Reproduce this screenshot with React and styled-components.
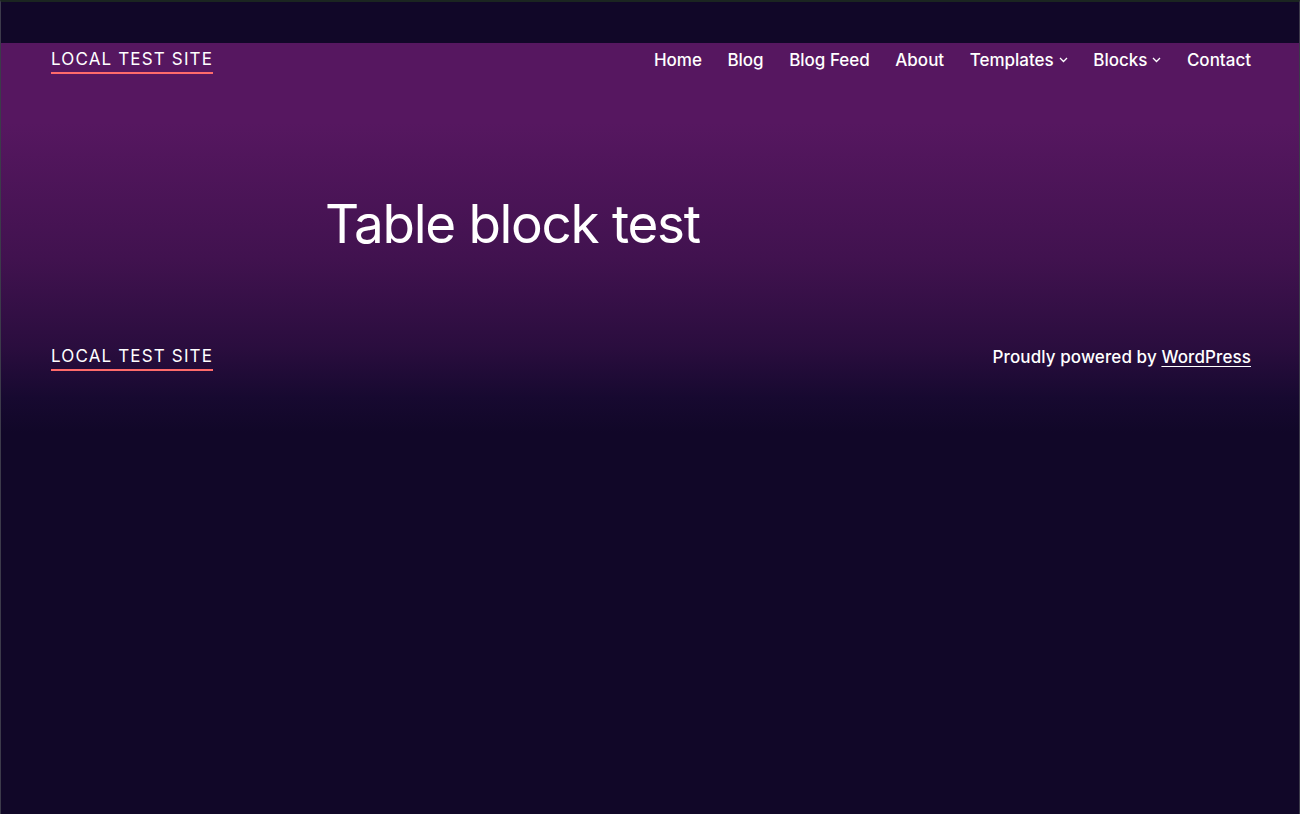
import React from "react";
import styled, { createGlobalStyle } from "styled-components";

const Global = createGlobalStyle`
  html, body { margin: 0; padding: 0; height: 100%; }
  body {
    background: #110728;
    font-family: Inter, "Noto Sans", sans-serif;
    color: #ffffff;
  }
  #root { min-height: 100%; }
`;

const Frame = styled.div`
  box-sizing: border-box;
  min-height: 814px;
  border-top: 2px solid #1b2521;
  border-left: 1px solid #3c3a4a;
  border-right: 1px solid #3c3a4a;
  background: #110728;
  display: flex;
  flex-direction: column;
`;

const TopBar = styled.div`
  height: 41px;
  background: #110728;
  flex-shrink: 0;
`;

const Page = styled.div`
  background: linear-gradient(
    to bottom,
    #561760 0px,
    #561760 80px,
    #41124f 215px,
    #2a0d3e 305px,
    #170930 355px,
    #110728 390px
  );
  flex: 1;
`;

const Bar = styled.header`
  display: flex;
  align-items: center;
  justify-content: space-between;
  padding: 2px 48px 0 50px;
  height: 30px;
`;

const SiteTitle = styled.a`
  font-size: 17px;
  font-weight: 400;
  letter-spacing: 1.15px;
  text-transform: uppercase;
  color: #fff;
  text-decoration: none;
  border-bottom: 2px solid #ff6b6b;
  padding-bottom: 3px;
  margin-top: 2px;
  line-height: 20px;
`;

const Nav = styled.nav`
  display: flex;
  align-items: center;
  gap: 25.5px;
`;

const NavItem = styled.a`
  font-size: 17px;
  font-weight: 500;
  color: #fff;
  text-decoration: none;
  display: flex;
  align-items: center;
  gap: 5px;
  letter-spacing: 0px;
`;

const Chevron = () => (
  <svg width="9" height="6" viewBox="0 0 9 6" fill="none">
    <path d="M1 1l3.5 3.5L8 1" stroke="#fff" strokeWidth="1.3" />
  </svg>
);

const Main = styled.main`
  width: 650px;
  margin: 0 auto;
  padding: 119px 0 0 0;
  height: 264px;
  box-sizing: border-box;
`;

const Title = styled.h1`
  margin: 0;
  font-size: 53px;
  font-weight: 400;
  letter-spacing: -1.3px;
  line-height: 60px;
  color: #fff;
`;

const Footer = styled.footer`
  display: flex;
  align-items: center;
  justify-content: space-between;
  padding: 0 48px 0 50px;
  height: 36px;
`;

const Powered = styled.p`
  margin: 0;
  font-size: 17px;
  font-weight: 500;
  letter-spacing: 0.1px;
  color: #fff;
`;

const Link = styled.a`
  color: #fff;
  text-decoration: underline;
  text-underline-offset: 3px;
  text-decoration-thickness: 1px;
`;

export default function App() {
  const items = [
    { label: "Home" },
    { label: "Blog" },
    { label: "Blog Feed" },
    { label: "About" },
    { label: "Templates", sub: true },
    { label: "Blocks", sub: true },
    { label: "Contact" },
  ];
  return (
    <>
      <Global />
      <Frame>
        <TopBar />
        <Page>
          <Bar>
            <SiteTitle href="#">Local Test Site</SiteTitle>
            <Nav>
              {items.map((it) => (
                <NavItem key={it.label} href="#">
                  {it.label}
                  {it.sub && <Chevron />}
                </NavItem>
              ))}
            </Nav>
          </Bar>
          <Main>
            <Title>Table block test</Title>
          </Main>
          <Footer>
            <SiteTitle href="#">Local Test Site</SiteTitle>
            <Powered>
              Proudly powered by <Link href="#">WordPress</Link>
            </Powered>
          </Footer>
        </Page>
      </Frame>
    </>
  );
}
